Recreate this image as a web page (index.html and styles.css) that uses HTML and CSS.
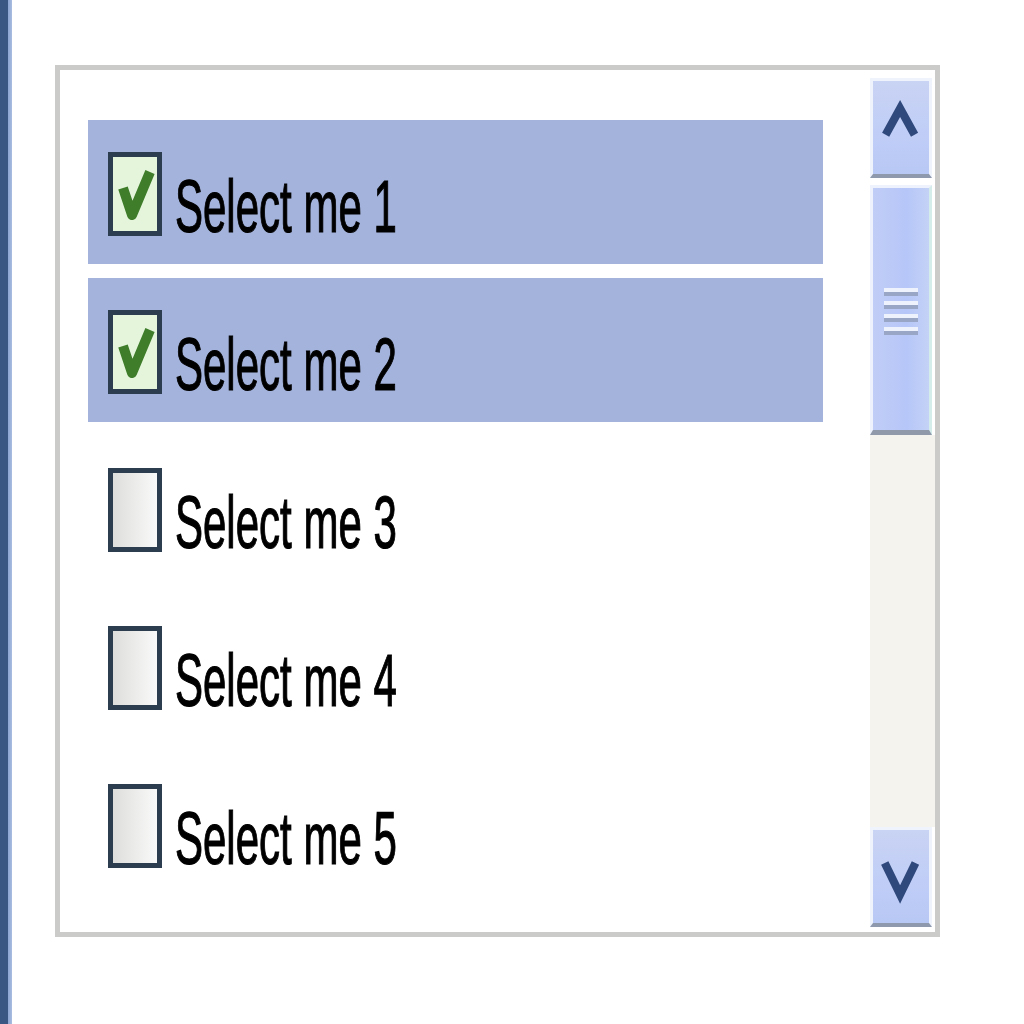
FILE: index.html
```html
<!DOCTYPE html>
<html>
<head>
<meta charset="utf-8">
<link rel="stylesheet" href="styles.css">
</head>
<body>
<div class="edge"></div>
<div class="stage">
  <div class="listbox">
    <div class="items">
      <div class="row sel">
        <svg class="cb" viewBox="0 0 54 84"><rect x="2.5" y="2.5" width="49" height="79" fill="#e4f5dc" stroke="#2b3d4f" stroke-width="5"/><polyline points="15,36 24,63 42,20" fill="none" stroke="#3f7d2a" stroke-width="10" stroke-linejoin="round"/></svg>
        <span class="label">Select me 1</span>
      </div>
      <div class="row sel">
        <svg class="cb" viewBox="0 0 54 84"><rect x="2.5" y="2.5" width="49" height="79" fill="#e4f5dc" stroke="#2b3d4f" stroke-width="5"/><polyline points="15,36 24,63 42,20" fill="none" stroke="#3f7d2a" stroke-width="10" stroke-linejoin="round"/></svg>
        <span class="label">Select me 2</span>
      </div>
      <div class="row">
        <svg class="cb" viewBox="0 0 54 84"><defs><linearGradient id="g" x1="0" y1="0" x2="1" y2="0"><stop offset="0" stop-color="#dcdcda"/><stop offset="1" stop-color="#fbfbfb"/></linearGradient></defs><rect x="2.5" y="2.5" width="49" height="79" fill="url(#g)" stroke="#2b3d4f" stroke-width="5"/></svg>
        <span class="label">Select me 3</span>
      </div>
      <div class="row">
        <svg class="cb" viewBox="0 0 54 84"><rect x="2.5" y="2.5" width="49" height="79" fill="url(#g)" stroke="#2b3d4f" stroke-width="5"/></svg>
        <span class="label">Select me 4</span>
      </div>
      <div class="row">
        <svg class="cb" viewBox="0 0 54 84"><rect x="2.5" y="2.5" width="49" height="79" fill="url(#g)" stroke="#2b3d4f" stroke-width="5"/></svg>
        <span class="label">Select me 5</span>
      </div>
    </div>
    <div class="scrollbar">
      <div class="btn">
        <svg viewBox="0 0 62 100" class="arrow"><polyline points="14,58 30,29 46,58" fill="none" stroke="#30497c" stroke-width="9"/></svg>
      </div>
      <div class="thumb">
        <div class="grip"><i></i><i></i><i></i><i></i></div>
      </div>
      <div class="track"></div>
      <div class="btn down">
        <svg viewBox="0 0 62 100" class="arrow"><polyline points="13,35 30,70 47,35" fill="none" stroke="#30497c" stroke-width="9"/></svg>
      </div>
    </div>
  </div>
</div>
</body>
</html>
```
FILE: styles.css
```css
html, body {
  margin: 0;
  padding: 0;
  background: #fff;
}
body {
  display: flex;
  width: 1024px;
  height: 1024px;
  overflow: hidden;
}
.edge {
  width: 12px;
  flex: none;
  background: linear-gradient(to right, #3a5682 0, #3a5682 8px, #8ca6d3 8px, #a9bde0 12px);
}
.stage {
  padding: 65px 0 0 43px;
}
.listbox {
  width: 885px;
  height: 872px;
  box-sizing: border-box;
  border: 5px solid #cbcbc9;
  background: #fff;
  display: flex;
}
.items {
  flex: 1;
  padding: 50px 0 0 28px;
  display: flex;
  flex-direction: column;
  gap: 14px;
}
.row {
  width: 735px;
  height: 144px;
  box-sizing: border-box;
  padding-left: 20px;
  display: flex;
  align-items: center;
  flex: none;
}
.row.sel {
  background: #a4b3db;
}
.cb {
  width: 54px;
  height: 84px;
  flex: none;
  margin-top: 4px;
}
.label {
  margin-left: 13px;
  margin-top: 30px;
  font-family: "Liberation Sans", Arial, sans-serif;
  font-size: 42px;
  color: #000;
  display: inline-block;
  transform: scaleY(1.75);
  -webkit-text-stroke: 0.7px #000;
  white-space: nowrap;
}
.scrollbar {
  width: 65px;
  flex: none;
  padding: 8px 0 5px 0;
  display: flex;
  flex-direction: column;
  background: #fff;
}
.btn {
  height: 100px;
  width: 62px;
  box-sizing: border-box;
  border: 3px solid #eef3fc;
  border-bottom: 4px solid #8e99ad;
  background: linear-gradient(#c9d3f3, #bfcdf7 60%, #b8c8f4);
  flex: none;
}
.arrow {
  width: 100%;
  height: 100%;
  display: block;
}
.thumb {
  margin-top: 7px;
  height: 250px;
  width: 62px;
  box-sizing: border-box;
  border: 3px solid #eef2fc;
  border-right-color: #d4ecea;
  border-bottom: 5px solid #8f99aa;
  background: linear-gradient(to right, #c0cdf6, #b6c6f8 60%, #c4d2f6);
  display: flex;
  align-items: center;
  justify-content: center;
  flex: none;
}
.grip {
  display: flex;
  flex-direction: column;
  gap: 5px;
  margin-top: 4px;
}
.grip i {
  display: block;
  width: 34px;
  height: 8px;
  box-sizing: border-box;
  border-top: 4px solid #eef2fc;
  border-bottom: 4px solid #9aa6c6;
}
.track {
  flex: 1;
  background: #f5f3ed;
}
```
